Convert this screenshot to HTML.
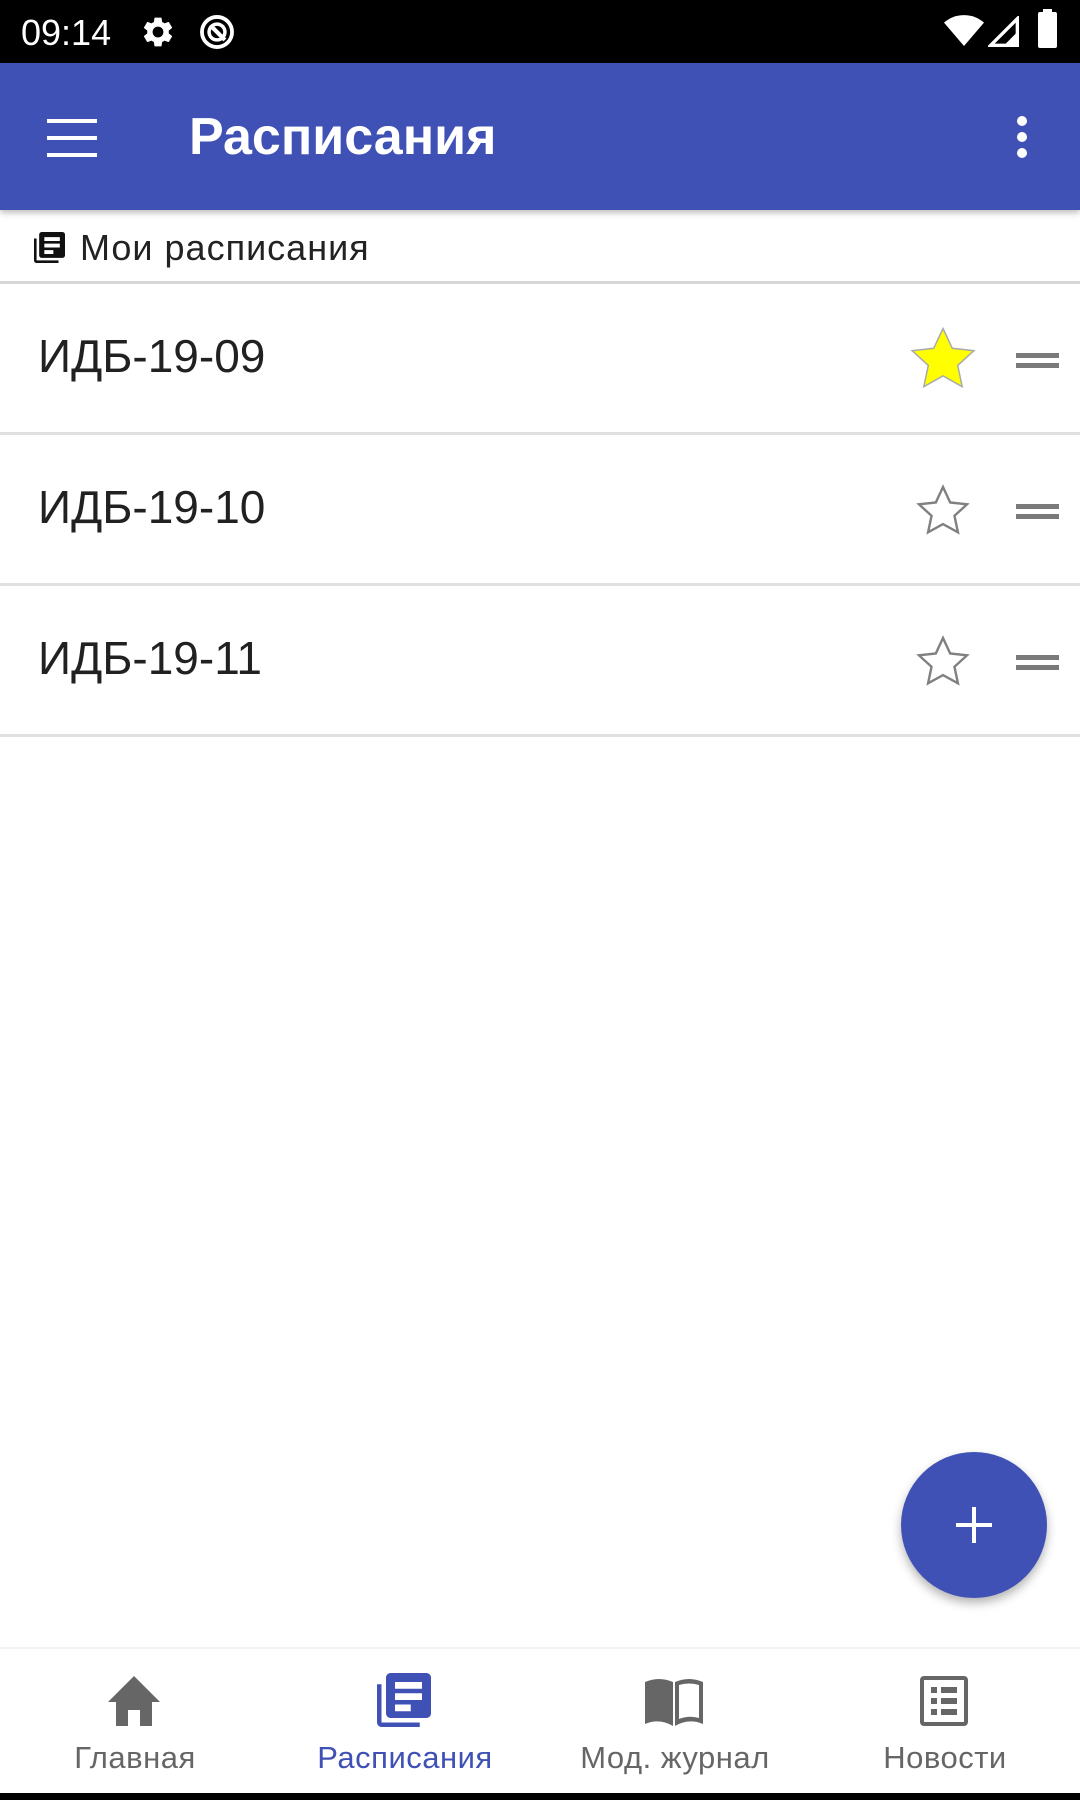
<!DOCTYPE html>
<html><head><meta charset="utf-8"><style>
*{margin:0;padding:0;box-sizing:border-box}
body{width:1080px;height:1800px;background:#fff;font-family:"Liberation Sans","DejaVu Sans",sans-serif;position:relative;overflow:hidden}
.abs{position:absolute}
.status{left:0;top:0;width:1080px;height:63px;background:#000;color:#fff}
.bar{left:0;top:63px;width:1080px;height:147px;background:#3f51b5;box-shadow:0 3px 6px rgba(0,0,0,.25)}
.row{left:0;width:1080px;height:151px;border-bottom:3px solid #e0e0e0}
.row .t{position:absolute;left:38px;top:45px;font-size:46px;color:#212121}
.nav{left:0;top:1647px;width:1080px;height:146px;background:#fff;border-top:2px solid #f2f2f2}
.lbl{position:absolute;top:1740px;font-size:31px;color:#666;text-align:center;width:270px;letter-spacing:.5px}
</style></head><body>
<div class="abs status">
 <div class="abs" style="left:21px;top:12px;font-size:36px">09:14</div>
 <svg class="abs" style="left:140px;top:14px" width="36" height="36" viewBox="0 0 24 24"><path fill="#fff" d="M19.14 12.94c.04-.3.06-.61.06-.94 0-.32-.02-.64-.07-.94l2.030-1.58a.49.49 0 0 0 .12-.61l-1.92-3.32a.49.49 0 0 0-.59-.22l-2.39.96c-.5-.38-1.03-.7-1.62-.94l-.36-2.54a.48.48 0 0 0-.48-.41h-3.84c-.24 0-.43.17-.47.41l-.36 2.54c-.59.24-1.13.57-1.62.94l-2.39-.96a.48.48 0 0 0-.59.22L2.74 8.87c-.12.21-.08.47.12.61l2.03 1.58c-.05.3-.09.63-.09.94s.02.64.07.94l-2.03 1.58a.49.49 0 0 0-.12.61l1.92 3.32c.12.22.37.29.59.22l2.39-.96c.5.38 1.03.7 1.62.94l.36 2.54c.05.24.24.41.48.41h3.84c.24 0 .44-.17.47-.41l.36-2.54c.59-.24 1.13-.56 1.62-.94l2.39.96c.22.08.47 0 .59-.22l1.92-3.32c.12-.22.07-.47-.12-.61l-2.01-1.58zM12 15.6A3.6 3.6 0 1 1 12 8.4a3.6 3.6 0 0 1 0 7.2z"/></svg>
 <svg class="abs" style="left:198px;top:13px" width="38" height="38" viewBox="0 0 24 24"><circle cx="12" cy="12" r="9.5" fill="none" stroke="#fff" stroke-width="2.4"/><circle cx="12" cy="12" r="5" fill="none" stroke="#fff" stroke-width="2.2"/><path d="M9 9l8 8" stroke="#fff" stroke-width="2.6"/></svg>
 <svg class="abs" style="left:944px;top:14px" width="40" height="34" viewBox="0 0 24 20"><path fill="#fff" d="M12 19L0 5c3.5-3 7.5-4.5 12-4.5S20.5 2 24 5z"/></svg>
 <svg class="abs" style="left:988px;top:16px" width="32" height="32" viewBox="0 0 24 24"><path fill="none" stroke="#fff" stroke-width="2.5" d="M22 2v20H2z"/><path fill="#fff" d="M22 12v10H12z"/></svg>
 <div class="abs" style="left:1038px;top:12px;width:19px;height:36px;background:#fff;border-radius:2px"></div>
 <div class="abs" style="left:1043px;top:9px;width:9px;height:4px;background:#fff"></div>
</div>
<div class="abs bar">
 <div class="abs" style="left:47px;top:56px;width:50px;height:4px;background:#fff;box-shadow:0 17px 0 #fff,0 34px 0 #fff"></div>
 <div class="abs" style="left:189px;top:44px;font-size:52px;font-weight:bold;color:#fff">Расписания</div>
 <div class="abs" style="left:1017px;top:53px;width:10px;height:10px;border-radius:50%;background:#fff;box-shadow:0 16px 0 #fff,0 32px 0 #fff"></div>
</div>
<div class="abs" style="left:0;top:210px;width:1080px;height:74px;border-bottom:3px solid #d6d6d6">
 <svg class="abs" style="left:34px;top:22px" width="31" height="31" viewBox="0 0 24 24"><path fill="#111" d="M2 5H0v17a2 2 0 0 0 2 2h17v-2H2zM22 0H6a2 2 0 0 0-2 2v16a2 2 0 0 0 2 2h16a2 2 0 0 0 2-2V2a2 2 0 0 0-2-2z"/><path fill="#fff" d="M8 4h12v3H8zM8 9h12v3H8zM8 14h7v3H8z"/></svg>
 <div class="abs" style="left:80px;top:17px;font-size:36px;color:#222;letter-spacing:1px">Мои расписания</div>
</div>
<div class="abs row" style="top:284px"><div class="t">ИДБ-19-09</div></div>
<div class="abs row" style="top:435px"><div class="t">ИДБ-19-10</div></div>
<div class="abs row" style="top:586px"><div class="t">ИДБ-19-11</div></div>
<svg class="abs" style="left:907px;top:324px" width="72" height="72" viewBox="0 0 24 24"><path fill="#ffff00" stroke="#aaa" stroke-width=".5" d="M12 1.5l3.1 6.6 7.2.8-5.4 4.9 1.5 7.1L12 17.3l-6.4 3.6 1.5-7.1-5.4-4.9 7.2-.8z"/></svg>
<svg class="abs" style="left:911px;top:479px" width="64" height="64" viewBox="0 0 24 24"><path fill="none" stroke="#808080" stroke-width=".9" d="M12 3l2.7 5.8 6.3.7-4.7 4.3 1.3 6.2L12 16.9 6.4 20l1.3-6.2L3 9.5l6.3-.7z"/></svg>
<svg class="abs" style="left:911px;top:630px" width="64" height="64" viewBox="0 0 24 24"><path fill="none" stroke="#808080" stroke-width=".9" d="M12 3l2.7 5.8 6.3.7-4.7 4.3 1.3 6.2L12 16.9 6.4 20l1.3-6.2L3 9.5l6.3-.7z"/></svg>
<div class="abs" style="left:1016px;top:353px;width:43px;height:5px;background:#7a7a7a;box-shadow:0 10px 0 #7a7a7a"></div>
<div class="abs" style="left:1016px;top:504px;width:43px;height:5px;background:#7a7a7a;box-shadow:0 10px 0 #7a7a7a"></div>
<div class="abs" style="left:1016px;top:655px;width:43px;height:5px;background:#7a7a7a;box-shadow:0 10px 0 #7a7a7a"></div>
<div class="abs" style="left:901px;top:1452px;width:146px;height:146px;border-radius:50%;background:#3f51b5;box-shadow:0 5px 10px rgba(0,0,0,.3)"></div>
<div class="abs" style="left:956px;top:1523px;width:36px;height:4px;background:#fff"></div>
<div class="abs" style="left:972px;top:1507px;width:4px;height:36px;background:#fff"></div>
<div class="abs nav"></div>
<svg class="abs" style="left:108px;top:1676px" width="52" height="50" viewBox="0 0 52 50"><path fill="#666" d="M26 0L52 26H44V50H32V34H20V50H8V26H0z"/></svg>
<svg class="abs" style="left:377px;top:1673px" width="54" height="54" viewBox="0 0 24 24"><path fill="#3f51b5" d="M2 5H0v17a2 2 0 0 0 2 2h17v-2H2zM22 0H6a2 2 0 0 0-2 2v16a2 2 0 0 0 2 2h16a2 2 0 0 0 2-2V2a2 2 0 0 0-2-2z"/><path fill="#fff" d="M8 4h12v3H8zM8 9h12v3H8zM8 14h7v3H8z"/></svg>
<svg class="abs" style="left:645px;top:1678px" width="58" height="48" viewBox="0 0 58 48"><path fill="#666" d="M0 4Q14-2 28 4V48Q14 40 0 46zM30 4Q44-2 58 4V46Q44 40 30 48z"/><path fill="#fff" d="M34 7Q44 4 54 7V40Q44 37 34 41z"/></svg>
<svg class="abs" style="left:920px;top:1676px" width="48" height="50" viewBox="0 0 48 50"><rect x="2" y="2" width="44" height="46" rx="2" fill="none" stroke="#666" stroke-width="4"/><path fill="#666" d="M11 11h6v6h-6zM21 11h16v6H21zM11 22h6v6h-6zM21 22h16v6H21zM11 33h6v6h-6zM21 33h16v6H21z"/></svg>
<div class="lbl" style="left:0">Главная</div>
<div class="lbl" style="left:270px;color:#3f51b5">Расписания</div>
<div class="lbl" style="left:540px">Мод. журнал</div>
<div class="lbl" style="left:810px">Новости</div>
<div class="abs" style="left:0;top:1793px;width:1080px;height:7px;background:#000"></div>
</body></html>
